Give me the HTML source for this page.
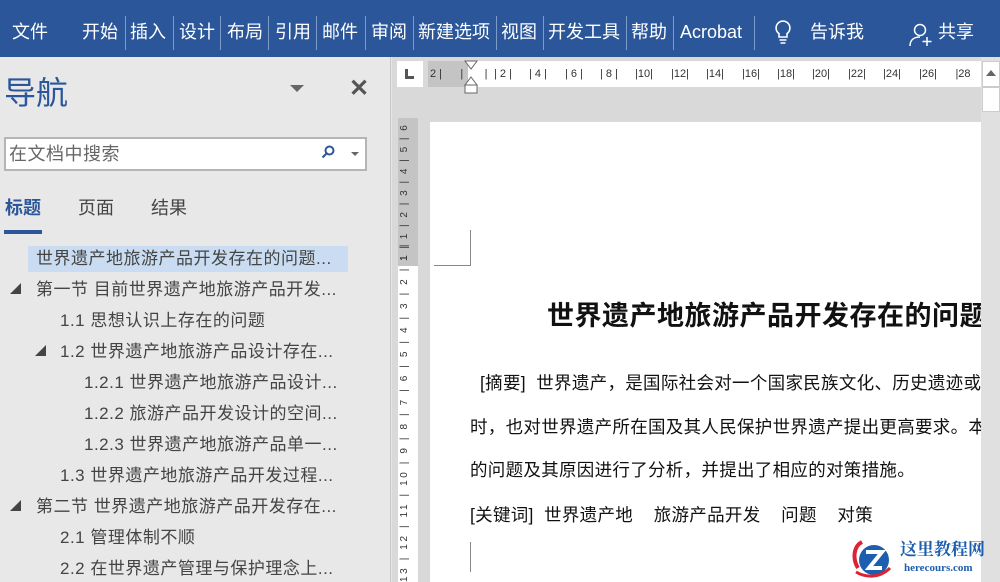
<!DOCTYPE html>
<html><head><meta charset="utf-8"><style>
*{margin:0;padding:0;box-sizing:border-box}
body{width:1000px;height:582px;overflow:hidden;position:relative;background:#e6e6e6;font-family:"Liberation Sans","Noto Sans CJK SC",sans-serif;}
.top{position:absolute;left:0;top:0;width:1000px;height:57px;background:#2b579a;color:#fff;font-size:18px}
.top span{position:absolute;top:20px;line-height:24px;white-space:nowrap}
.sep{position:absolute;top:16px;width:1px;height:34px;background:#7d9cc9}
.nav{position:absolute;left:0;top:57px;width:391px;height:525px;background:#e8e8e8;border-right:1px solid #c8c8c8}
.abs{position:absolute;white-space:nowrap}
.item{position:absolute;font-size:17px;color:#444;line-height:26px;white-space:nowrap;letter-spacing:0.5px}
.tri{position:absolute;width:0;height:0;border-left:11px solid transparent;border-bottom:11px solid #444}
.doc{position:absolute;left:392px;top:57px;width:608px;height:525px;background:#d9d9d9}
.rl{position:absolute;top:10px;font-size:11px;color:#333;line-height:14px;width:30px;margin-left:-15px;text-align:center;white-space:nowrap}
.page{position:absolute;left:430px;top:122px;width:551px;height:460px;background:#fff;overflow:hidden}
.page div{position:absolute;white-space:nowrap;color:#111;font-family:"Liberation Sans","Noto Sans CJK SC",sans-serif}
</style></head><body>
<div class="top">
<span style="left:12px">文件</span>
<span style="left:82px">开始</span><div class="sep" style="left:125px"></div>
<span style="left:130px">插入</span><div class="sep" style="left:173px"></div>
<span style="left:179px">设计</span><div class="sep" style="left:220px"></div>
<span style="left:227px">布局</span><div class="sep" style="left:268px"></div>
<span style="left:275px">引用</span><div class="sep" style="left:316px"></div>
<span style="left:322px">邮件</span><div class="sep" style="left:365px"></div>
<span style="left:371px">审阅</span><div class="sep" style="left:413px"></div>
<span style="left:418px">新建选项</span><div class="sep" style="left:496px"></div>
<span style="left:501px">视图</span><div class="sep" style="left:543px"></div>
<span style="left:548px">开发工具</span><div class="sep" style="left:626px"></div>
<span style="left:631px">帮助</span><div class="sep" style="left:673px"></div>
<span style="left:680px">Acrobat</span><div class="sep" style="left:754px"></div>
<svg style="position:absolute;left:771px;top:19px" width="24" height="26" viewBox="0 0 24 26" fill="none" stroke="#fff" stroke-width="1.6"><path d="M12 2a7 7 0 0 0-4 12.7V18h8v-3.3A7 7 0 0 0 12 2z"/><path d="M8.5 21h7M9.5 24h5"/></svg>
<span style="left:810px">告诉我</span>
<svg style="position:absolute;left:908px;top:22px" width="26" height="26" viewBox="0 0 26 26" fill="none" stroke="#fff" stroke-width="1.5"><circle cx="12" cy="8" r="5.5"/><path d="M2 24c0-6 4-9 10-9"/><path d="M19 15v9M14.5 19.5h9"/></svg>
<span style="left:938px">共享</span>
</div>

<div class="nav">
<div class="abs" style="left:4px;top:16px;font-size:32px;color:#2b579a;line-height:40px">导航</div>
<div class="abs" style="left:290px;top:28px;width:0;height:0;border-left:7px solid transparent;border-right:7px solid transparent;border-top:7px solid #666"></div>
<div class="abs" style="left:349px;top:20px;font-size:24px;color:#555;line-height:24px;font-weight:bold">✕</div>
<div class="abs" style="left:4px;top:80px;width:363px;height:34px;background:#fff;border:2px solid #b5b5b5"></div>
<div class="abs" style="left:9px;top:84px;font-size:18px;color:#666;line-height:26px;letter-spacing:0.5px">在文档中搜索</div>
<svg style="position:absolute;left:321px;top:88px" width="14" height="14" viewBox="0 0 14 14" fill="none" stroke="#2b579a" stroke-width="2"><circle cx="8.5" cy="5.5" r="4"/><path d="M5.5 8.5L1.5 12.5"/></svg>
<div class="abs" style="left:351px;top:95px;width:0;height:0;border-left:4px solid transparent;border-right:4px solid transparent;border-top:4px solid #666"></div>
<div class="abs" style="left:5px;top:138px;font-size:18px;color:#2b579a;font-weight:bold;line-height:26px">标题</div>
<div class="abs" style="left:78px;top:138px;font-size:18px;color:#444;line-height:26px">页面</div>
<div class="abs" style="left:151px;top:138px;font-size:18px;color:#444;line-height:26px">结果</div>
<div class="abs" style="left:4px;top:173px;width:38px;height:4px;background:#2b579a"></div>
<div class="abs" style="left:28px;top:189px;width:320px;height:26px;background:#c9dcf2"></div>
<div class="item" style="left:36px;top:189px">世界遗产地旅游产品开发存在的问题...</div>
<div class="tri" style="left:10px;top:226px"></div>
<div class="item" style="left:36px;top:220px">第一节 目前世界遗产地旅游产品开发...</div>
<div class="item" style="left:60px;top:251px">1.1 思想认识上存在的问题</div>
<div class="tri" style="left:35px;top:288px"></div>
<div class="item" style="left:60px;top:282px">1.2 世界遗产地旅游产品设计存在...</div>
<div class="item" style="left:84px;top:313px">1.2.1 世界遗产地旅游产品设计...</div>
<div class="item" style="left:84px;top:344px">1.2.2 旅游产品开发设计的空间...</div>
<div class="item" style="left:84px;top:375px">1.2.3 世界遗产地旅游产品单一...</div>
<div class="item" style="left:60px;top:406px">1.3 世界遗产地旅游产品开发过程...</div>
<div class="tri" style="left:10px;top:443px"></div>
<div class="item" style="left:36px;top:437px">第二节 世界遗产地旅游产品开发存在...</div>
<div class="item" style="left:60px;top:468px">2.1 管理体制不顺</div>
<div class="item" style="left:60px;top:499px">2.2 在世界遗产管理与保护理念上...</div>
</div>

<div class="doc">
<div class="abs" style="left:5px;top:4px;width:26px;height:26px;background:#fff"></div>
<div class="abs" style="left:13px;top:12px;width:3px;height:10px;background:#555"></div>
<div class="abs" style="left:13px;top:19px;width:9px;height:3px;background:#555"></div>
<div class="abs" style="left:36px;top:4px;width:40px;height:26px;background:#c4c4c4"></div>
<div class="abs" style="left:76px;top:4px;width:513px;height:26px;background:#fff"></div>
<div class="abs" style="left:38px;top:10px;font-size:11px;color:#333;line-height:14px">2 |&nbsp;&nbsp;&nbsp;&nbsp;&nbsp;&nbsp;|&nbsp;&nbsp;&nbsp;&nbsp;&nbsp;&nbsp;&nbsp;|</div>
<div class="rl" style="left:111px">| 2 |</div>
<div class="rl" style="left:146px">| 4 |</div>
<div class="rl" style="left:182px">| 6 |</div>
<div class="rl" style="left:217px">| 8 |</div>
<div class="rl" style="left:252px">|10|</div>
<div class="rl" style="left:288px">|12|</div>
<div class="rl" style="left:323px">|14|</div>
<div class="rl" style="left:359px">|16|</div>
<div class="rl" style="left:394px">|18|</div>
<div class="rl" style="left:429px">|20|</div>
<div class="rl" style="left:465px">|22|</div>
<div class="rl" style="left:500px">|24|</div>
<div class="rl" style="left:536px">|26|</div>
<div class="rl" style="left:571px">|28</div>
<svg style="position:absolute;left:72px;top:3px" width="14" height="36" viewBox="0 0 14 36" fill="#fff" stroke="#666"><path d="M1 1h12L7 9z"/><path d="M7 17l6 8H1z"/><rect x="1" y="25" width="12" height="8"/></svg>
<div class="abs" style="left:589px;top:0;width:19px;height:525px;background:#e0e0e0"></div>
<div class="abs" style="left:590px;top:4px;width:18px;height:26px;background:#fff;border:1px solid #ccc"></div>
<div class="abs" style="left:594px;top:13px;width:0;height:0;border-left:5px solid transparent;border-right:5px solid transparent;border-bottom:6px solid #666"></div>
<div class="abs" style="left:590px;top:30px;width:18px;height:25px;background:#fff;border:1px solid #ccc"></div>
<div class="abs" style="left:6px;top:61px;width:20px;height:148px;background:#c4c4c4"></div>
<div class="abs" style="left:6px;top:209px;width:20px;height:316px;background:#fff"></div>
<div class="abs" style="left:7px;top:64px;width:18px;font-size:10px;color:#333;line-height:12px;writing-mode:vertical-rl;transform:rotate(180deg);height:140px;text-align:left;letter-spacing:2px">1 | 1 | 2 | 3 | 4 | 5 | 6</div>
<div class="abs" style="left:7px;top:212px;width:18px;font-size:10px;color:#333;line-height:12px;writing-mode:vertical-rl;transform:rotate(180deg);height:313px;text-align:right;letter-spacing:2.6px">13 | 12 | 11 | 10 | 9 | 8 | 7 | 6 | 5 | 4 | 3 | 2 | 1 |</div>
</div>

<div class="page">
<div style="left:40px;top:108px;width:1px;height:36px;background:#888"></div>
<div style="left:4px;top:143px;width:36px;height:1px;background:#888"></div>
<div style="left:117px;top:177px;font-size:27px;font-weight:bold;line-height:34px;letter-spacing:0.5px">世界遗产地旅游产品开发存在的问题</div>
<div style="left:50px;top:248px;font-size:17.5px;line-height:26px;letter-spacing:0.3px">[摘要]&nbsp; 世界遗产，是国际社会对一个国家民族文化、历史遗迹或</div>
<div style="left:40px;top:292px;font-size:17.5px;line-height:26px;letter-spacing:0.3px">时，也对世界遗产所在国及其人民保护世界遗产提出更高要求。本</div>
<div style="left:40px;top:335px;font-size:17.5px;line-height:26px;letter-spacing:0.3px">的问题及其原因进行了分析，并提出了相应的对策措施。</div>
<div style="left:40px;top:380px;font-size:17.5px;line-height:26px;letter-spacing:0.3px">[关键词]&nbsp; 世界遗产地&nbsp;&nbsp;&nbsp; 旅游产品开发&nbsp;&nbsp;&nbsp; 问题&nbsp;&nbsp;&nbsp; 对策</div>
<div style="left:40px;top:420px;width:1px;height:30px;background:#888"></div>
</div>

<svg style="position:absolute;left:852px;top:538px" width="40" height="42" viewBox="0 0 40 42"><path d="M10 4C2 8 0 20 6 30" stroke="#d23" stroke-width="4" fill="none"/><circle cx="22" cy="22" r="15" fill="#1d5fae"/><path d="M14 14h16L17 30h13" stroke="#fff" stroke-width="4" fill="none"/><path d="M4 34c10 6 24 6 34-4" stroke="#d23" stroke-width="3" fill="none"/></svg>
<div class="abs" style="left:900px;top:540px;font-size:17px;font-weight:bold;color:#1d5fae;font-family:'Liberation Serif','Noto Serif CJK SC',serif;line-height:20px">这里教程网</div>
<div class="abs" style="left:904px;top:561px;font-size:11px;font-weight:bold;color:#1d5fae;font-family:'Liberation Serif',serif;line-height:14px">herecours.com</div>
</body></html>
